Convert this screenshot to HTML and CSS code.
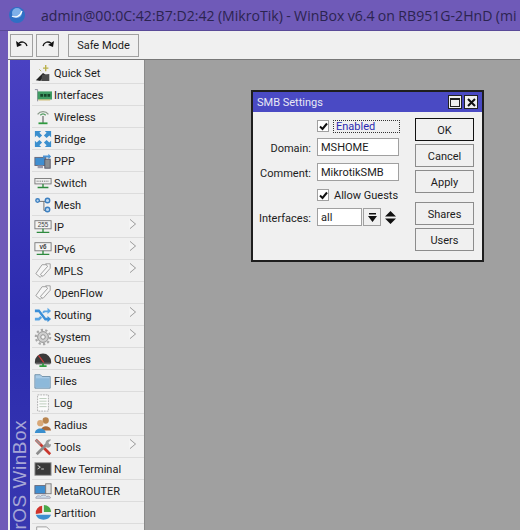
FILE: index.html
```html
<!DOCTYPE html>
<html lang="en">
<head>
    <meta charset="UTF-8">
    <title>WinBox</title>
    <link rel="stylesheet" href="styles.css">
</head>
<body>
    <div class="titlebar">
        <svg class="logo" width="18" height="18" viewBox="0 0 18 18"><circle cx="9" cy="9" r="8" fill="#2f6fc4"/><circle cx="9" cy="7" r="5" fill="#7fb0e8"/><path d="M4 10c3 2 8 1 10-5" fill="none" stroke="#fff" stroke-width="1.200"/></svg>
        <span class="title-text">admin@00:0C:42:B7:D2:42 (MikroTik) - WinBox v6.4 on RB951G-2HnD (mi</span>
    </div>

    <div class="frame">
        <div class="toolbar">
            <button class="tool-btn"><svg width="14" height="12" viewBox="0 0 14 12"><path d="M4 4c3-2 7-1 8 3" fill="none" stroke="#111" stroke-width="1.300"/><path d="M1 2l1 6 5-2z" fill="#111"/></svg></button>
            <button class="tool-btn"><svg width="14" height="12" viewBox="0 0 14 12"><path d="M10 4C7 2 3 3 2 7" fill="none" stroke="#111" stroke-width="1.300"/><path d="M13 2l-1 6-5-2z" fill="#111"/></svg></button>
            <button class="safe-btn">Safe Mode</button>
        </div>

        <div class="workspace">
            <div class="sidebar">
                <div class="brand"><span class="brand-text">rOS WinBox</span></div>
                <ul class="menu">
                    <li><svg class="ico" viewBox="0 0 20 20"><path d="M2 18l8-8 3 2-6 7z" fill="#222"/><path d="M9 12l8-1v8H8z" fill="#4a4a4a"/><path d="M13 1v7M10 4.500h6" stroke="#b9b04a" stroke-width="1.500"/><path d="M6 6l2 2" stroke="#a8a860"/></svg>Quick Set</li>
                    <li><svg class="ico" viewBox="0 0 20 20"><path d="M1 4h3v13" fill="none" stroke="#889"/><rect x="4" y="6" width="16" height="9" fill="#3f9c63"/><path d="M7 9h3v3H7zM11 9h3v3h-3zM15 9h3v3h-3z" fill="#17452a"/><path d="M5 15h13v1H5z" fill="#c8b25a"/></svg>Interfaces</li>
                    <li><svg class="ico" viewBox="0 0 20 20"><path d="M4 7c3-4 9-4 12 0" fill="none" stroke="#8a9a8a" stroke-width="1.500"/><path d="M7 8c2-2 4-2 6 0" fill="none" stroke="#4d9a5c" stroke-width="1.500"/><path d="M10 9v8" stroke="#777" stroke-width="1.500"/><path d="M5 17h10" stroke="#2e9a3e" stroke-width="2"/></svg>Wireless</li>
                    <li><svg class="ico" viewBox="0 0 20 20"><g fill="#3b8fce"><path d="M1 1h7L6 3l3 3-3 3-3-3-2 2z"/><path d="M19 1h-7l2 2-3 3 3 3 3-3 2 2z"/><path d="M1 19h7l-2-2 3-3-3-3-3 3-2-2z"/><path d="M19 19h-7l2-2-3-3 3-3 3 3 2-2z"/></g></svg>Bridge</li>
                    <li><svg class="ico" viewBox="0 0 20 20"><rect x="1" y="6" width="12" height="9" fill="#3f8ed0" stroke="#667"/><rect x="12" y="8" width="6" height="10" fill="#8b8f92" stroke="#556"/><path d="M4 15v3h6v-3" fill="#99a"/><path d="M10 4h6V2l3 3-3 3V6h-6z" fill="#4a94d6"/></svg>PPP</li>
                    <li><svg class="ico" viewBox="0 0 20 20"><rect x="1" y="5" width="18" height="6" fill="#eee" stroke="#777"/><path d="M3 8h14" stroke="#555" stroke-dasharray="1 1"/><path d="M10 11v4M4 15h12" stroke="#2e8a3e" stroke-width="1.500"/></svg>Switch</li>
                    <li><svg class="ico" viewBox="0 0 20 20"><path d="M5 6h6v10h4M11 6h4" fill="none" stroke="#666"/><g fill="#bcd8f0" stroke="#3c7fc0" stroke-width="1.500"><circle cx="4" cy="5" r="2"/><circle cx="15" cy="5" r="2.500"/><circle cx="15" cy="15" r="2.500"/></g></svg>Mesh</li>
                    <li class="sub"><svg class="ico" viewBox="0 0 20 20"><rect x="1" y="3" width="18" height="9" fill="#f4f4f4" stroke="#777"/><text x="10" y="10.500" class="ico-text">255</text><path d="M10 12v4M3 16h14" stroke="#2e8a3e" stroke-width="1.500"/></svg>IP</li>
                    <li class="sub"><svg class="ico" viewBox="0 0 20 20"><rect x="1" y="3" width="18" height="9" fill="#f4f4f4" stroke="#777"/><text x="10" y="10.500" class="ico-text bold">v6</text><path d="M10 12v4M3 16h14" stroke="#2e8a3e" stroke-width="1.500"/></svg>IPv6</li>
                    <li class="sub"><svg class="ico" viewBox="0 0 20 20"><g fill="#f6f6f6" stroke="#9a9a9a"><path d="M9 3h6v5l-8 9-5-4z"/><path d="M13 2h5v5l-8 9-3-2 8-9z"/></g></svg>MPLS</li>
                    <li><svg class="ico" viewBox="0 0 20 20"><g fill="#f6f6f6" stroke="#9a9a9a"><path d="M9 3h6v5l-8 9-5-4z"/><path d="M13 2h5v5l-8 9-3-2 8-9z"/></g></svg>OpenFlow</li>
                    <li class="sub"><svg class="ico" viewBox="0 0 20 20"><path d="M1 4h5l7 9h2v-2l4 3.500L15 18v-2h-3L5 7H1z" fill="#3b8fd8"/><path d="M1 13h4l2-2 2 2-3 3H1zM11 5h4V2l4 3.500L15 9V7h-3l-1 1-2-1z" fill="#5aa5e4"/></svg>Routing</li>
                    <li class="sub"><svg class="ico" viewBox="0 0 20 20"><circle cx="10" cy="10" r="6" fill="#cfcfcf" stroke="#8a8a8a"/><circle cx="10" cy="10" r="8" fill="none" stroke="#a8a8a8" stroke-width="2.400" stroke-dasharray="2.500 2.500"/><circle cx="10" cy="10" r="2.500" fill="#f4f4f4" stroke="#888"/></svg>System</li>
                    <li><svg class="ico" viewBox="0 0 20 20"><path d="M1 13a9 9 0 0 1 18 0v2H1z" fill="#3a3a3a"/><path d="M5 6l6 8" stroke="#d03a3a" stroke-width="1.300"/><path d="M2 15h16" stroke="#666" stroke-width="2"/><path d="M10 15v2M6 18h8" stroke="#2e9a3e" stroke-width="2"/></svg>Queues</li>
                    <li><svg class="ico" viewBox="0 0 20 20"><path d="M1 3h6l2 2h9v13H1z" fill="#a9cbe6" stroke="#6d8ea8"/><path d="M2 7h15v10H2z" fill="#8db9da"/></svg>Files</li>
                    <li><svg class="ico" viewBox="0 0 20 20"><path d="M4 1h12v18H4z" fill="#fbfbfb" stroke="#aaa" stroke-dasharray="2 1"/><path d="M6 5h8M6 8h8M6 11h8M6 14h8" stroke="#b9cbb9"/></svg>Log</li>
                    <li><svg class="ico" viewBox="0 0 20 20"><circle cx="13" cy="5" r="3.500" fill="#b8844e"/><path d="M8 16c0-6 10-6 11 0z" fill="#a96a3a"/><circle cx="7" cy="8" r="3.500" fill="#d8a878"/><path d="M1 19c0-7 12-7 12 0z" fill="#3b8fce"/></svg>Radius</li>
                    <li class="sub"><svg class="ico" viewBox="0 0 20 20"><path d="M2 2l16 16" stroke="#c9382e" stroke-width="3"/><path d="M2 2l5 5" stroke="#999" stroke-width="2"/><path d="M3 18L14 7" stroke="#8d8d8d" stroke-width="3"/><path d="M13 7c-1-3 2-6 6-5l-3 3 1 2 2 0c0 3-3 5-6 3z" fill="#9a9a9a"/></svg>Tools</li>
                    <li><svg class="ico" viewBox="0 0 20 20"><rect x="1" y="3" width="18" height="14" fill="#3a3a3a" stroke="#999"/><path d="M4 6l3 2-3 2" fill="none" stroke="#ddd"/><path d="M8 10h3" stroke="#ddd"/></svg>New Terminal</li>
                    <li><svg class="ico" viewBox="0 0 20 20"><rect x="1" y="4" width="12" height="9" fill="#3f8ed0" stroke="#667"/><rect x="13" y="2" width="6" height="11" fill="#e0e0e0" stroke="#777"/><path d="M2 18c0-3 4-3 5-2 2-2 6-2 7 0 3-1 5 1 4 2z" fill="#cfe0ee" stroke="#99a"/></svg>MetaROUTER</li>
                    <li><svg class="ico" viewBox="0 0 20 20"><path d="M9 2a8 8 0 0 0-7 9l7-1z" fill="#d0342c"/><path d="M11 1a8 8 0 0 1 8 8h-8z" fill="#4aa84a"/><path d="M2 12h17a9 8 0 0 1-17 0z" fill="#3c8fd0"/></svg>Partition</li>
                    <li><svg class="ico" viewBox="0 0 20 20"><path d="M3 1h11l3 3v15H3z" fill="#f8f8f8" stroke="#999"/></svg></li>
                </ul>
            </div>

            <div class="desktop">
                <div class="window">
                    <div class="win-title">
                        <span class="win-name">SMB Settings</span>
                        <span class="win-ctl"><i class="ctl-max"></i></span>
                        <span class="win-ctl"><svg width="9" height="9" viewBox="0 0 9 9"><path d="M1 1l7 7M8 1L1 8" stroke="#111" stroke-width="2"/></svg></span>
                    </div>
                    <div class="win-body">
                        <div class="form">
                            <div class="row row-check">
                                <span class="label"></span>
                                <span class="check"><svg width="9" height="9" viewBox="0 0 9 9"><path d="M1 4.500l2.500 2.500L8 1.500" fill="none" stroke="#111" stroke-width="2"/></svg></span>
                                <span class="check-label focused">Enabled</span>
                            </div>
                            <div class="row row-field">
                                <span class="label">Domain:</span>
                                <span class="input">MSHOME</span>
                            </div>
                            <div class="row row-field">
                                <span class="label">Comment:</span>
                                <span class="input">MikrotikSMB</span>
                            </div>
                            <div class="row row-guest">
                                <span class="label"></span>
                                <span class="check"><svg width="9" height="9" viewBox="0 0 9 9"><path d="M1 4.500l2.500 2.500L8 1.500" fill="none" stroke="#111" stroke-width="2"/></svg></span>
                                <span class="check-label">Allow Guests</span>
                            </div>
                            <div class="row row-iface">
                                <span class="label">Interfaces:</span>
                                <span class="input input-short">all</span>
                                <span class="drop"><svg width="9" height="9" viewBox="0 0 9 9"><path d="M1 0h7v1.500H1zM0 3h9L4.500 9z" fill="#111"/></svg></span>
                                <svg class="updown" width="11" height="13" viewBox="0 0 11 13"><path d="M5.500 0L11 5.500H0zM0 7.500h11L5.500 13z" fill="#111"/></svg>
                            </div>
                        </div>
                        <div class="actions">
                            <button class="btn btn-default">OK</button>
                            <button class="btn">Cancel</button>
                            <button class="btn">Apply</button>
                            <button class="btn btn-shares">Shares</button>
                            <button class="btn">Users</button>
                        </div>
                    </div>
                </div>
            </div>
        </div>
    </div>
</body>
</html>
```

FILE: styles.css
```css
html, body {
    margin: 0;
    padding: 0;
    height: 530px;
    overflow: hidden;
}

body {
    background: #6f5ab8;
    font-family: Roboto, "Liberation Sans", sans-serif;
    font-size: 11px;
    color: #1c1c1c;
}

.titlebar {
    height: 31px;
    display: flex;
    align-items: center;
    padding-left: 8px;
    white-space: nowrap;
    overflow: hidden;
    box-sizing: border-box;
    border-bottom: 1px solid #5a4a98;
}

.logo {
    flex: none;
    margin-right: 15px;
}

.title-text {
    font-family: "Open Sans", sans-serif;
    font-size: 14.1px;
    word-spacing: -0.3px;
    color: #2c2450;
}

.frame {
    margin-left: 8px;
    background: #f0f0f0;
    height: 499px;
    overflow: hidden;
}

.toolbar {
    height: 29px;
    display: flex;
    align-items: center;
    gap: 3px;
    padding-left: 2px;
    box-sizing: border-box;
    border-bottom: 1px solid #777;
}

.tool-btn, .safe-btn {
    height: 23px;
    padding: 0;
    display: flex;
    align-items: center;
    justify-content: center;
    background: #f0f0f0;
    border: 1px solid #a0a0a0;
    font: inherit;
    color: inherit;
}

.tool-btn {
    width: 23px;
}

.safe-btn {
    width: 71px;
    margin-left: 6px;
}

.workspace {
    display: flex;
    padding-left: 2px;
    height: 470px;
}

.sidebar {
    display: flex;
    flex: none;
    width: 134px;
    overflow: hidden;
    border-right: 1px solid #8a8a8a;
    background: #f0f0f0;
}

.brand {
    width: 20px;
    flex: none;
    background: linear-gradient(#4a42c2, #2a2aae 55%, #3838b0);
    display: flex;
    flex-direction: column;
    justify-content: flex-end;
    align-items: center;
}

.brand-text {
    writing-mode: vertical-rl;
    transform: rotate(180deg);
    font-family: "Liberation Sans", sans-serif;
    font-size: 19px;
    line-height: 20px;
    letter-spacing: 0.5px;
    color: #a6a6d6;
    white-space: nowrap;
}

.menu {
    list-style: none;
    margin: 0;
    padding: 2px 0 0 1px;
    flex: 1;
}

.menu li {
    position: relative;
    height: 22px;
    box-sizing: border-box;
    display: flex;
    align-items: center;
    margin-left: 1px;
    padding-top: 2px;
    border-bottom: 1px solid #dcdcdc;
    white-space: nowrap;
}

.ico {
    width: 18px;
    height: 18px;
    flex: none;
    margin: -2px 2px 0 2px;
}

.ico-text {
    font-family: "Liberation Sans", sans-serif;
    font-size: 7px;
    text-anchor: middle;
    fill: #444;
}

.ico-text.bold {
    font-weight: bold;
}

/* outlined submenu arrow on the right of a row */
.sub::before, .sub::after {
    content: "";
    position: absolute;
    top: 3px;
    width: 0;
    height: 0;
    border-top: 5px solid transparent;
    border-bottom: 5px solid transparent;
}

.sub::before {
    right: 8px;
    border-left: 6px solid #8a8a8a;
}

.sub::after {
    right: 9px;
    border-left: 6px solid #f4f4f4;
}

.desktop {
    flex: 1;
    background: #a0a0a0;
    padding: 30px 0 0 106px;
}

.window {
    width: 233px;
    height: 172px;
    box-sizing: border-box;
    border: 2px solid #1e1e1e;
    background: #f0f0f0;
}

.win-title {
    height: 20px;
    background: #4a4ac4;
    color: #e8e8f4;
    display: flex;
    align-items: center;
    padding: 0 4px 0 4px;
    gap: 2px;
}

.win-name {
    flex: 1;
}

.win-ctl {
    width: 14px;
    height: 14px;
    box-sizing: border-box;
    background: #f0f0f0;
    border: 1px solid #222;
    display: flex;
    align-items: center;
    justify-content: center;
}

.ctl-max {
    width: 10px;
    height: 9px;
    box-sizing: border-box;
    border: 1px solid #222;
    border-top-width: 2px;
}

.win-body {
    display: flex;
    padding: 6px 0 0 0;
}

.form {
    width: 162px;
    flex: none;
}

.row {
    display: flex;
    align-items: center;
}

.label {
    width: 58px;
    flex: none;
    margin-right: 6px;
    padding-top: 2px;
    text-align: right;
    white-space: nowrap;
}

.row-check {
    height: 12px;
    margin-top: 2px;
}

.row-field {
    height: 18px;
    margin-top: 6px;
}

.row-field + .row-field {
    margin-top: 7px;
}

.row-guest {
    height: 12px;
    margin-top: 8px;
}

.row-iface {
    height: 18px;
    margin-top: 7px;
}

.check {
    width: 12px;
    height: 12px;
    box-sizing: border-box;
    border: 1px solid #a0a0a0;
    background: #fff;
    display: flex;
    align-items: center;
    justify-content: center;
    flex: none;
}

.check-label {
    margin-left: 5px;
    white-space: nowrap;
}

.check-label.focused {
    width: 67px;
    height: 13px;
    box-sizing: border-box;
    margin-left: 4px;
    padding-left: 2px;
    line-height: 11px;
    color: #2a2ab0;
    border: 1px dotted #333;
}

.input {
    width: 82px;
    height: 18px;
    box-sizing: border-box;
    border: 1px solid #a0a0a0;
    background: #fff;
    padding-left: 3px;
    line-height: 18px;
    flex: none;
}

.input-short {
    width: 45px;
}

.drop {
    width: 18px;
    height: 18px;
    box-sizing: border-box;
    margin-left: 1px;
    border: 1px solid #a0a0a0;
    background: #f0f0f0;
    display: flex;
    align-items: center;
    justify-content: center;
    flex: none;
}

.updown {
    margin-left: 4px;
    flex: none;
}

.actions {
    display: flex;
    flex-direction: column;
    gap: 3px;
}

.btn {
    width: 59px;
    height: 23px;
    padding: 2px 0 0 0;
    background: #f0f0f0;
    border: 1px solid #8c8c8c;
    font: inherit;
    color: inherit;
}

.btn-default {
    border-color: #111;
}

.btn-shares {
    margin-top: 6px;
}
```
